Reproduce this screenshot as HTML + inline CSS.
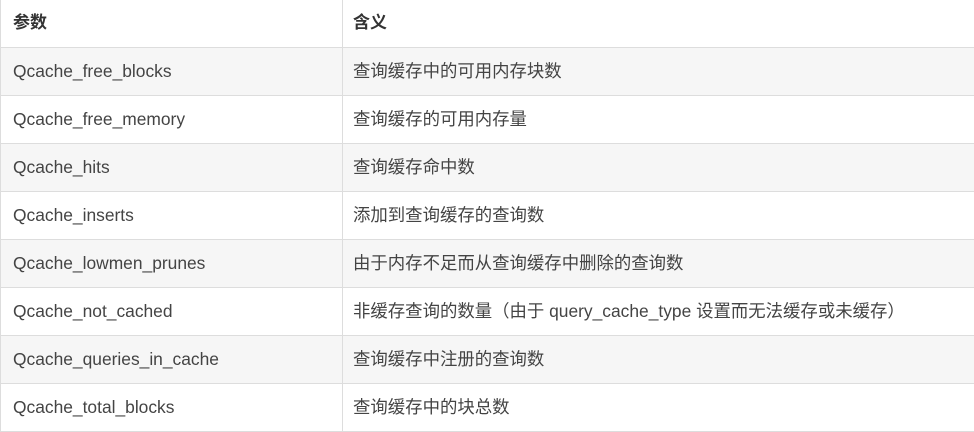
<!DOCTYPE html>
<html><head><meta charset="utf-8"><style>
*{margin:0;padding:0;box-sizing:border-box}
body{width:974px;height:429px;overflow:hidden;background:#fff;font-family:"Liberation Sans","Noto Sans CJK SC",sans-serif;font-size:17.4px;color:#444}
.r{position:absolute;left:0;width:990px;height:49px;border:1px solid #dddddd}
.r.g{background:#f6f6f6}
.c1,.c2{position:absolute;top:0px;height:47px;line-height:46px;white-space:nowrap}
.c1{left:12px}
.c2{left:352px}
.d{position:absolute;left:341px;top:0;width:1px;height:47px;background:#dddddd}
.h{font-weight:bold;color:#333;font-size:17px}
</style></head><body>
<div class="r" style="top:-1px"><div class="c1 h">参数</div><div class="d"></div><div class="c2 h">含义</div></div>
<div class="r g" style="top:47px"><div class="c1">Qcache_free_blocks</div><div class="d"></div><div class="c2">查询缓存中的可用内存块数</div></div>
<div class="r" style="top:95px"><div class="c1">Qcache_free_memory</div><div class="d"></div><div class="c2">查询缓存的可用内存量</div></div>
<div class="r g" style="top:143px"><div class="c1">Qcache_hits</div><div class="d"></div><div class="c2">查询缓存命中数</div></div>
<div class="r" style="top:191px"><div class="c1">Qcache_inserts</div><div class="d"></div><div class="c2">添加到查询缓存的查询数</div></div>
<div class="r g" style="top:239px"><div class="c1">Qcache_lowmen_prunes</div><div class="d"></div><div class="c2">由于内存不足而从查询缓存中删除的查询数</div></div>
<div class="r" style="top:287px"><div class="c1">Qcache_not_cached</div><div class="d"></div><div class="c2">非缓存查询的数量（由于 query_cache_type 设置而无法缓存或未缓存）</div></div>
<div class="r g" style="top:335px"><div class="c1">Qcache_queries_in_cache</div><div class="d"></div><div class="c2">查询缓存中注册的查询数</div></div>
<div class="r" style="top:383px"><div class="c1">Qcache_total_blocks</div><div class="d"></div><div class="c2">查询缓存中的块总数</div></div>
</body></html>
